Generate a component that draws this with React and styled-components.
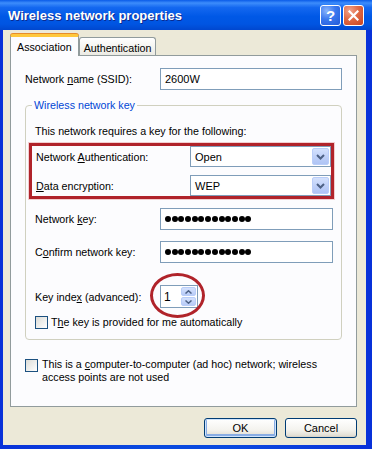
import React from 'react'
import styled, { createGlobalStyle } from 'styled-components'

const GlobalStyle = createGlobalStyle`
  html, body {
    margin: 0;
    padding: 0;
    background: #ffffff;
  }
  body {
    font-family: "Liberation Sans", Arial, sans-serif;
    font-size: 10.7px;
    color: #000;
  }
  * {
    box-sizing: border-box;
  }
`

const Frame = styled.div`
  width: 372px;
  height: 449px;
  display: flex;
  flex-direction: column;
  background: linear-gradient(to right, #0831D9, #0A4ADF 40%, #0A4ADF 60%, #0831D9);
  overflow: hidden;
`

const TitleBar = styled.div`
  height: 30px;
  flex: none;
  display: flex;
  align-items: center;
  justify-content: space-between;
  padding: 0 8px 0 8px;
  background: linear-gradient(
    to bottom,
    #0A5BE8 0%,
    #3D8DFB 10%,
    #1468F0 25%,
    #0058E6 55%,
    #0055E2 80%,
    #0047CF 100%
  );
`

const Title = styled.div`
  color: #ffffff;
  font-weight: bold;
  font-size: 13px;
  text-shadow: 1px 1px 0 #0B2A8F;
`

const CaptionButtons = styled.div`
  display: flex;
  gap: 2px;
  margin-top: 1px;
`

const CaptionButton = styled.div`
  width: 21px;
  height: 21px;
  border: 1px solid #ffffff;
  border-radius: 3px;
  display: flex;
  align-items: center;
  justify-content: center;
  color: #ffffff;
  font-weight: bold;
  font-size: 15px;
  background: ${p => (p.$close
    ? 'radial-gradient(circle at 30% 25%, #F2A48C, #E06A45 45%, #C8431F 100%)'
    : 'radial-gradient(circle at 30% 25%, #8AB4FB, #3A78EE 45%, #2259D8 100%)')};
`

const Body = styled.div`
  flex: 1;
  margin: 0 6px 4px 3px;
  background: #ECE9D8;
  padding: 4px 9px 0 7px;
  display: flex;
  flex-direction: column;
`

const TabsRow = styled.div`
  height: 21px;
  display: flex;
  align-items: flex-end;
  position: relative;
  z-index: 1;
`

const Tab = styled.div`
  height: ${p => (p.$active ? '22px' : '18px')};
  margin-bottom: ${p => (p.$active ? '-1px' : '0')};
  padding: 0 ${p => (p.$active ? '6px' : '4px')};
  display: flex;
  align-items: center;
  border: 1px solid #919B9C;
  border-bottom: none;
  border-top: ${p => (p.$active ? '3px solid #FFC83C' : '1px solid #919B9C')};
  border-radius: 3px 3px 0 0;
  background: ${p => (p.$active ? '#FCFCFE' : 'linear-gradient(#FFFFFF, #F3F3EF 60%, #EBEAE3)')};
  box-shadow: ${p => (p.$active ? '0 -1px 0 #E68B2C' : 'none')};
  padding-top: ${p => (p.$active ? '0' : '2px')};
`

const Panel = styled.div`
  height: 352px;
  flex: none;
  background: #FCFCFE;
  border: 1px solid #919B9C;
  padding: 12px 14px 0 14px;
  display: flex;
  flex-direction: column;
`

const FieldRow = styled.div`
  display: flex;
  align-items: center;
  margin-top: ${p => p.$top || 0}px;
  padding-left: ${p => p.$indent || 0}px;
`

const Label = styled.div`
  width: ${p => p.$width}px;
  flex: none;
  white-space: nowrap;
`

const TextBox = styled.div`
  width: ${p => p.$width}px;
  height: ${p => p.$height || 22}px;
  border: 1px solid #7F9DB9;
  background: #ffffff;
  padding: 0 4px;
  display: flex;
  align-items: center;
  gap: 0.7px;
  font-size: 11px;
`

const Dot = styled.span`
  width: 6px;
  height: 6px;
  border-radius: 50%;
  background: #000;
  flex: none;
`

const GroupBox = styled.div`
  position: relative;
  margin-top: 15px;
  border: 1px solid #D0D0BF;
  border-radius: 4px;
  padding: 18px 7px 10px 3px;
  display: flex;
  flex-direction: column;
`

const GroupTitle = styled.div`
  position: absolute;
  top: -8px;
  left: 6px;
  padding: 0 2px;
  background: #FCFCFE;
  color: #0046D5;
  line-height: 14px;
`

const Intro = styled.div`
  line-height: 14px;
  padding-left: 6px;
`

const Highlight = styled.div`
  margin-top: 5px;
  border: 3px solid #B0232A;
  box-shadow: 0 0 0 1px rgba(230, 150, 150, 0.45);
  padding: 0 0 0 4px;
  display: flex;
  flex-direction: column;
  gap: 8px;
`

const Combo = styled.div`
  width: 141px;
  height: 21px;
  border: 1px solid #7F9DB9;
  background: #ffffff;
  padding: 1px 1px 1px 4px;
  display: flex;
  align-items: center;
  justify-content: space-between;
  font-size: 11px;
`

const ComboArrow = styled.div`
  width: 17px;
  height: 100%;
  border-radius: 2px;
  border: 1px solid #B9CDF9;
  background: linear-gradient(#D4E1FD, #BCCEF8 60%, #AFC4F5);
  display: flex;
  align-items: center;
  justify-content: center;
`

const SpinWrap = styled.div`
  position: relative;
`

const Spinner = styled.div`
  width: 38px;
  height: 23px;
  border: 1px solid #7F9DB9;
  background: #ffffff;
  padding: 1px 1px 1px 3px;
  display: flex;
  align-items: center;
  justify-content: space-between;
  font-size: 12px;
`

const SpinButtons = styled.div`
  width: 15px;
  height: 100%;
  display: flex;
  flex-direction: column;
  gap: 1px;
`

const SpinHalf = styled.div`
  flex: 1;
  border-radius: 2px;
  border: 1px solid #B9CDF9;
  background: linear-gradient(#D4E1FD, #B8CBF7);
  display: flex;
  align-items: center;
  justify-content: center;
`

const RingMark = styled.div`
  position: absolute;
  left: -10px;
  top: -12px;
  width: 55px;
  height: 45px;
  border: 3.5px solid #B0232A;
  border-radius: 50%;
  pointer-events: none;
`

const CheckRow = styled.label`
  display: flex;
  align-items: flex-start;
  gap: ${p => p.$gap || 3}px;
  margin-top: ${p => p.$top || 0}px;
  padding-left: ${p => p.$indent || 0}px;
  line-height: 13px;
`

const CheckBox = styled.span`
  width: 13px;
  height: 13px;
  flex: none;
  border: 1px solid #1C5180;
  background: linear-gradient(135deg, #DCDCD7, #FFFFFF);
  margin-top: ${p => p.$drop || 0}px;
`

const ButtonRow = styled.div`
  margin-top: 11px;
  display: flex;
  justify-content: flex-end;
  gap: 8px;
`

const Button = styled.div`
  width: ${p => p.$width}px;
  height: 20px;
  border: 1px solid #003C74;
  border-radius: 3px;
  background: linear-gradient(#FFFFFF, #F4F3EE 60%, #E3E0D6 90%, #D6D0C5);
  display: flex;
  align-items: center;
  justify-content: center;
  font-size: 11px;
  box-shadow: ${p => (p.$default ? 'inset 0 0 0 1px #CEE3FC, inset 0 -1px 0 2px #89ADE4' : 'none')};
`

const Chevron = ({ up }) => (
  <svg width="9" height="6" viewBox="0 0 9 6">
    <path
      d={up ? 'M1 5 L4.5 1.5 L8 5' : 'M1 1 L4.5 4.5 L8 1'}
      fill="none"
      stroke="#4D6185"
      strokeWidth="2"
    />
  </svg>
)

const SmallChevron = ({ up }) => (
  <svg width="7" height="4" viewBox="0 0 7 4">
    <path
      d={up ? 'M0.5 3.5 L3.5 0.8 L6.5 3.5' : 'M0.5 0.5 L3.5 3.2 L6.5 0.5'}
      fill="none"
      stroke="#4D6185"
      strokeWidth="1.5"
    />
  </svg>
)

const PasswordBox = ({ width }) => (
  <TextBox $width={width}>
    {Array.from({ length: 13 }).map((_, i) => <Dot key={i} />)}
  </TextBox>
)

const App = () => {
  return (
    <>
      <GlobalStyle />
      <Frame>
        <TitleBar>
          <Title>Wireless network properties</Title>
          <CaptionButtons>
            <CaptionButton>?</CaptionButton>
            <CaptionButton $close>
              <svg width="11" height="11" viewBox="0 0 11 11">
                <path d="M1.5 1.5 L9.5 9.5 M9.5 1.5 L1.5 9.5" stroke="#fff" strokeWidth="2.2" strokeLinecap="square" />
              </svg>
            </CaptionButton>
          </CaptionButtons>
        </TitleBar>
        <Body>
          <TabsRow>
            <Tab $active>Association</Tab>
            <Tab>Authentication</Tab>
          </TabsRow>
          <Panel>
            <FieldRow>
              <Label $width={135}>Network <u>n</u>ame (SSID):</Label>
              <TextBox $width={182}>2600W</TextBox>
            </FieldRow>

            <GroupBox>
              <GroupTitle>Wireless network key</GroupTitle>
              <Intro>This network requires a key for the following:</Intro>

              <Highlight>
                <FieldRow>
                  <Label $width={154}>Network <u>A</u>uthentication:</Label>
                  <Combo>
                    <span>Open</span>
                    <ComboArrow><Chevron /></ComboArrow>
                  </Combo>
                </FieldRow>
                <FieldRow>
                  <Label $width={154}><u>D</u>ata encryption:</Label>
                  <Combo>
                    <span>WEP</span>
                    <ComboArrow><Chevron /></ComboArrow>
                  </Combo>
                </FieldRow>
              </Highlight>

              <FieldRow $top={9} $indent={6}>
                <Label $width={125}>Network <u>k</u>ey:</Label>
                <PasswordBox width={173} />
              </FieldRow>
              <FieldRow $top={11} $indent={6}>
                <Label $width={125}>C<u>o</u>nfirm network key:</Label>
                <PasswordBox width={173} />
              </FieldRow>

              <FieldRow $top={22} $indent={6}>
                <Label $width={125}>Key inde<u>x</u> (advanced):</Label>
                <SpinWrap>
                  <Spinner>
                    <span>1</span>
                    <SpinButtons>
                      <SpinHalf><SmallChevron up /></SpinHalf>
                      <SpinHalf><SmallChevron /></SpinHalf>
                    </SpinButtons>
                  </Spinner>
                  <RingMark />
                </SpinWrap>
              </FieldRow>

              <CheckRow $top={8} $indent={6}>
                <CheckBox />
                <span>T<u>h</u>e key is provided for me automatically</span>
              </CheckRow>
            </GroupBox>

            <CheckRow $top={18} $gap={4}>
              <CheckBox $drop={1} />
              <span>
                This is a <u>c</u>omputer-to-computer (ad hoc) network; wireless
                <br />
                access points are not used
              </span>
            </CheckRow>
          </Panel>
          <ButtonRow>
            <Button $width={73} $default>OK</Button>
            <Button $width={72}>Cancel</Button>
          </ButtonRow>
        </Body>
      </Frame>
    </>
  )
}

export default App
